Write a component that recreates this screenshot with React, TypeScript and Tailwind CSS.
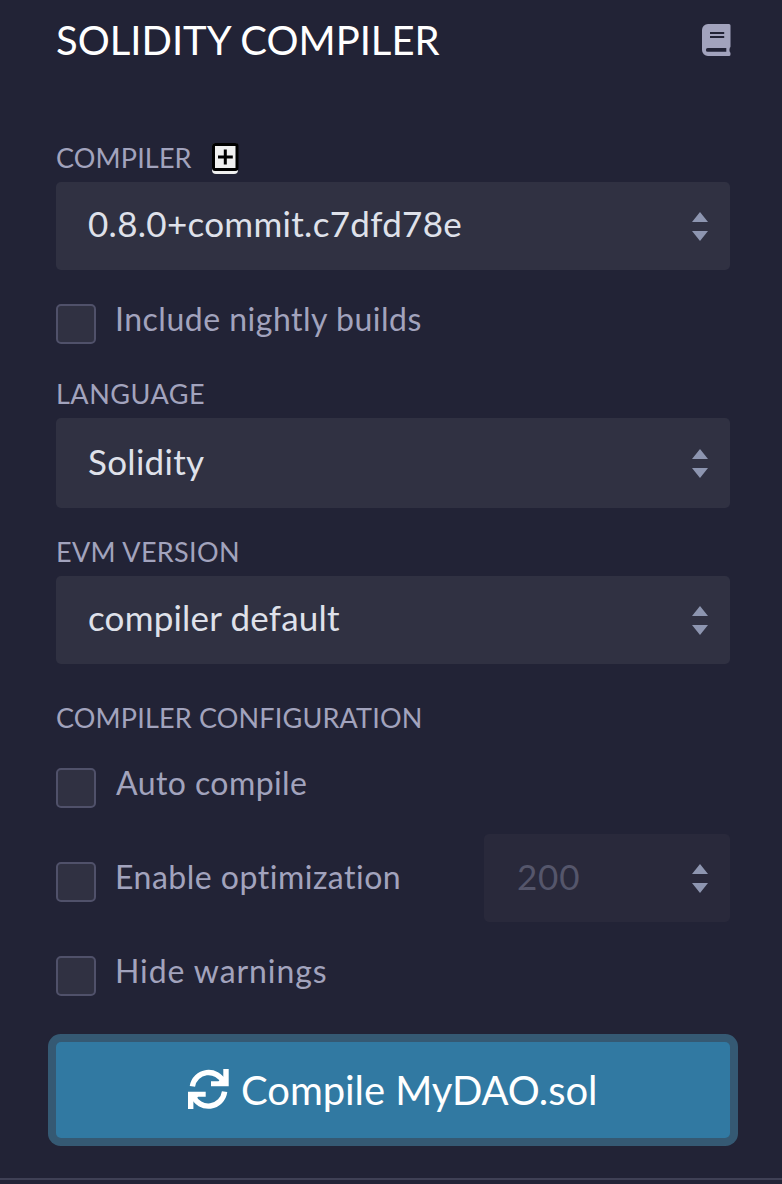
import type { ReactNode } from "react";

function BookIcon({ className }: { className: string }) {
  return (
    <svg width="29" height="32" viewBox="0 0 29 32" className={className}>
      <path
        d="M6 0H27a1.5 1.5 0 0 1 1.5 1.5V22.5q0 .8-.7 1.3q-.7 2 0 4.2q.7.5.7 1.2v1.3a1.5 1.5 0 0 1-1.5 1.5H6a6 6 0 0 1-6-6V6a6 6 0 0 1 6-6z"
        className="fill-[#a2a3bd]"
      />
      <path d="M8 8h14.2v2H8zM8 12h14.2v2H8zM5.8 24H24.3v3.8H5.8a1.9 1.9 0 0 1 0-3.8z" className="fill-[#222336]" />
    </svg>
  );
}

function SyncIcon({ className }: { className: string }) {
  return (
    <svg width="41" height="40" viewBox="0 0 41 40" className={className}>
      <path d="M4.4 17.3A16.4 16.4 0 0 1 35.6 13.2" fill="none" stroke="#fff" strokeWidth="5.4" />
      <path d="M35.3 0h5.4v17.3H23V12.2h7.5l4.8-4.5z" fill="#fff" />
      <path d="M36.6 22.7A16.4 16.4 0 0 1 5.1 26.8" fill="none" stroke="#fff" strokeWidth="5.4" />
      <path d="M5.4 40H0V22.7h17.7v5.1h-7.5l-4.8 4.5z" fill="#fff" />
    </svg>
  );
}

function Arrows() {
  return (
    <svg width="16" height="29" viewBox="0 0 16 29" className="shrink-0 fill-[#8d95b0]">
      <path d="M8 0l8 10H0zM0 19h16L8 29z" />
    </svg>
  );
}

function Label({ className, children }: { className: string; children: ReactNode }) {
  return (
    <div className={`flex h-8 items-center whitespace-nowrap text-[27px] leading-8 text-[#a2a3bd] ${className}`}>
      {children}
    </div>
  );
}

function Select({ className, text, children }: { className: string; text: string; children: string }) {
  return (
    <button
      className={`mt-2 flex w-full items-center justify-between rounded-[5px] bg-[#303142] pl-8 pr-[22px] text-left text-[35px] leading-[42px] text-[#dfe1ea] ${className}`}
    >
      <span className={text}>{children}</span>
      <Arrows />
    </button>
  );
}

function Check({ className, text, children }: { className: string; text: string; children: string }) {
  return (
    <label className={`flex h-[46px] items-start ${className}`}>
      <span className="mt-1.5 size-10 shrink-0 rounded-[5px] border-2 border-[#50516a] bg-[#303142]" />
      <span className={`mt-px whitespace-nowrap text-[32px] leading-10 text-[#a2a3bd] ${text}`}>{children}</span>
    </label>
  );
}

export default function App() {
  return (
    <div className="flex h-[1184px] w-[782px] flex-col overflow-hidden bg-[#222336] pt-[14px] font-['Lato',sans-serif]">
      <main className="ml-14 w-[674px]">
        <header className="flex h-12 items-center justify-between">
          <h1 className="pt-[3px] text-[40px] leading-[48px] text-white">SOLIDITY COMPILER</h1>
          <BookIcon className="-mr-px mt-1" />
        </header>

        <Label className="mt-20 tracking-[0.15px]">
          COMPILER
          <svg width="28" height="32" viewBox="0 0 28 32" className="ml-[19px]">
            <rect x="1" y="1" width="26" height="31" rx="4" fill="#f0f0f0" />
            <rect x="2.5" y="2.5" width="23.5" height="25" rx="1.5" fill="none" stroke="#000" strokeWidth="3" />
            <path d="M14.3 7.5v15M7 15h14.8" stroke="#000" strokeWidth="3" />
          </svg>
        </Label>
        <Select className="h-[88px]" text="pb-[7px] tracking-[0.3px]">0.8.0+commit.c7dfd78e</Select>
        <Check className="mt-7" text="ml-[19px] tracking-[0.5px]">Include nightly builds</Check>

        <Label className="mt-[34px] tracking-[0.5px]">LANGUAGE</Label>
        <Select className="h-[90px]" text="pb-[5px] tracking-[0.3px]">Solidity</Select>

        <Label className="mt-7 tracking-[0.35px]">EVM VERSION</Label>
        <Select className="h-[88px]" text="pb-[7px] tracking-[0.2px]">compiler default</Select>

        <Label className="mt-[38px] tracking-[0.17px]">COMPILER CONFIGURATION</Label>
        <Check className="mt-7" text="ml-5 tracking-[0.42px]">Auto compile</Check>
        <div className="mt-[26px] flex h-[88px] items-start justify-between">
          <Check className="mt-[22px]" text="ml-[19px] tracking-[0.5px]">Enable optimization</Check>
          <div className="flex h-[88px] w-[246px] items-center justify-between rounded-[5px] bg-[#29293b] pl-8 pr-[22px] text-[35px] leading-[42px] tracking-[0.8px] text-[#55566b]">
            <span className="pb-1 pl-px">200</span>
            <Arrows />
          </div>
        </div>
        <Check className="mt-7" text="ml-[19px] tracking-[0.92px]">Hide warnings</Check>

        <button className="mt-[46px] flex h-24 w-full items-center rounded-[5px] bg-[#3179a2] pl-[132px] text-white shadow-[0_0_0_8px_#355973]">
          <SyncIcon className="-mt-0.5 shrink-0" />
          <span className="ml-3 whitespace-nowrap text-[40px] leading-[48px] tracking-[-0.06px]">Compile MyDAO.sol</span>
        </button>
      </main>
      <div className="mt-10 h-0.5 shrink-0 bg-[#3f4055]" />
    </div>
  );
}
